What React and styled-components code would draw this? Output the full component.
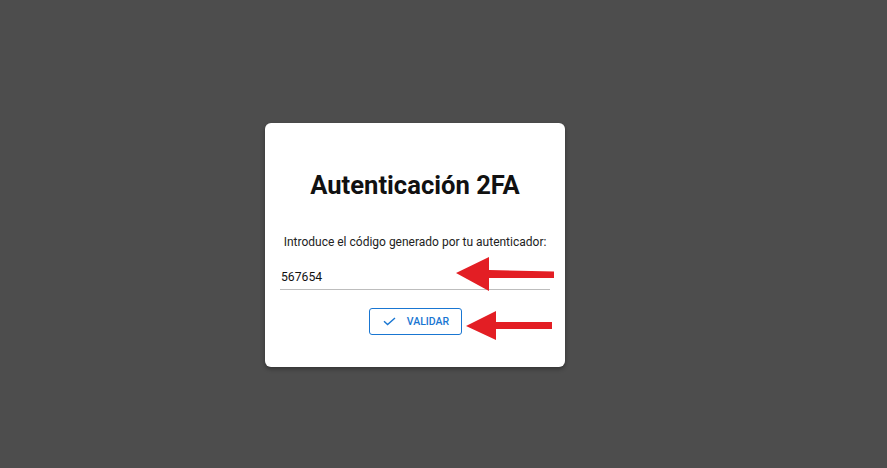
import React from "react";
import styled, { createGlobalStyle } from "styled-components";

const Global = createGlobalStyle`
  html, body { margin: 0; padding: 0; background: #4d4d4d; }
  body { font-family: Roboto, "Liberation Sans", Arial, sans-serif; }
  * { box-sizing: border-box; }
`;

const Page = styled.div`
  position: relative;
  width: 887px;
  height: 468px;
  overflow: hidden;
  padding: 123px 0 0 265px;
`;

const Card = styled.div`
  width: 300px;
  background: #ffffff;
  border-radius: 6px;
  box-shadow: 0 2px 4px rgba(0, 0, 0, 0.35);
  padding: 47px 15px 32px;
  display: flex;
  flex-direction: column;
  align-items: stretch;
`;

const Title = styled.h1`
  margin: 0;
  font-size: 25.6px;
  line-height: 30px;
  font-weight: 700;
  color: #111111;
  text-align: center;
`;

const Label = styled.p`
  margin: 32px -10px 0;
  font-size: 12px;
  line-height: 20px;
  color: #222222;
  text-align: center;
  white-space: nowrap;
`;

const CodeInput = styled.input`
  margin-top: 12px;
  height: 26px;
  width: 100%;
  border: none;
  border-bottom: 1px solid #bdbdbd;
  padding: 0 0 0 1px;
  font-family: inherit;
  font-size: 12.2px;
  color: #111111;
  background: transparent;
  outline: none;
`;

const Actions = styled.div`
  margin-top: 18px;
  display: flex;
  justify-content: center;
`;

const OutlineButton = styled.button`
  height: 27px;
  width: 93px;
  display: flex;
  align-items: center;
  justify-content: center;
  gap: 11px;
  border: 1px solid #1976d2;
  border-radius: 3px;
  background: #fff;
  color: #1976d2;
  font-family: inherit;
  font-size: 10.5px;
  font-weight: 500;
  letter-spacing: 0;
  padding: 0 0 0 2px;
  cursor: pointer;
`;

const Overlay = styled.svg`
  position: absolute;
  left: 0;
  top: 0;
  pointer-events: none;
`;

const CheckIcon = () => (
  <svg width="13" height="9" viewBox="0 0 13 9">
    <polyline
      points="1,4.2 4.6,7.6 12,1"
      fill="none"
      stroke="#1976d2"
      strokeWidth="1.4"
    />
  </svg>
);

export default function App() {
  return (
    <>
      <Global />
      <Page>
        <Card>
          <Title>Autenticación 2FA</Title>
          <Label>Introduce el código generado por tu autenticador:</Label>
          <CodeInput defaultValue="567654" />
          <Actions>
            <OutlineButton>
              <CheckIcon />
              VALIDAR
            </OutlineButton>
          </Actions>
        </Card>
        <Overlay width="887" height="468" viewBox="0 0 887 468">
          <polygon points="456,273 489,257 489,270 554,271.5 554,278 489,278 489,291" fill="#e31e24" />
          <polygon points="466,326 496,311 496,322 552,322 552,329 496,329 496,340" fill="#e31e24" />
        </Overlay>
      </Page>
    </>
  );
}
